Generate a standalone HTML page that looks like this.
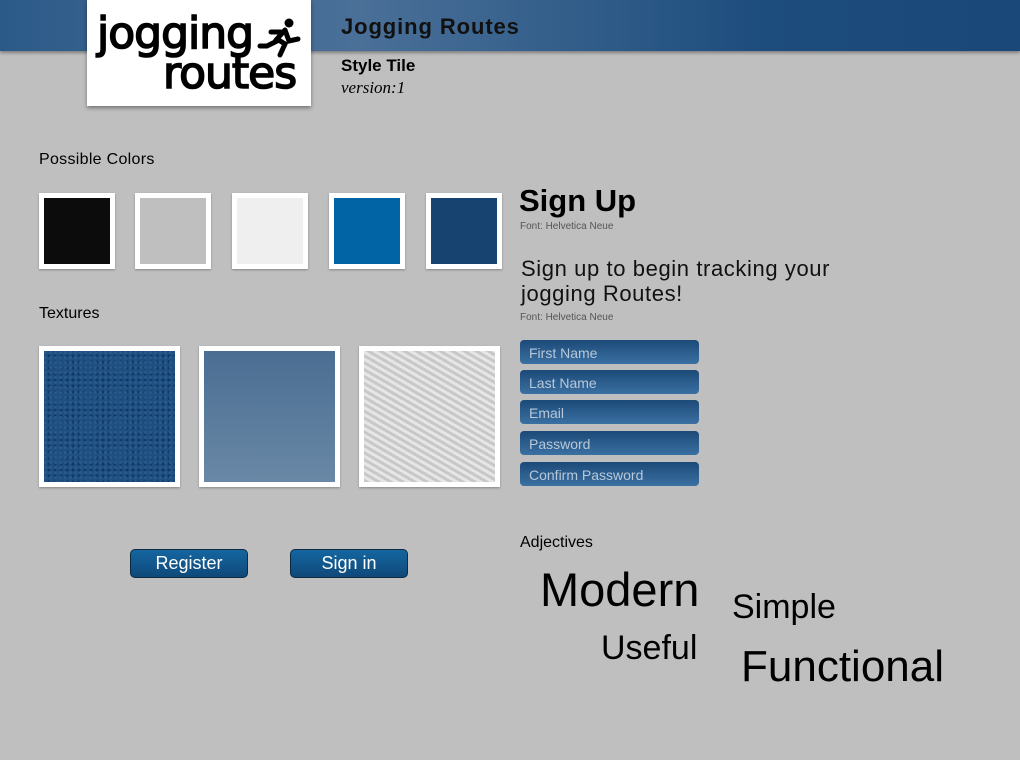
<!DOCTYPE html><html><head><style>
*{margin:0;padding:0;box-sizing:border-box}
body{width:1020px;height:760px;background:#bfbfbf;font-family:"Liberation Sans",sans-serif;position:relative;overflow:hidden}
.a{position:absolute}
.hdr{left:0;top:0;width:1020px;height:51px;background:linear-gradient(90deg,#2c5a88,#4a7098 35%,#1d4d7d 75%,#1a4878);box-shadow:0 2px 3px rgba(0,0,0,.35)}
.logo{left:87px;top:0;width:224px;height:106px;background:#fff;box-shadow:0 2px 4px rgba(0,0,0,.4)}
.lt{font-size:44px;line-height:40px;font-family:'DejaVu Sans',sans-serif;letter-spacing:-1px;-webkit-text-stroke:1.6px #000}
.sw{width:76px;height:76px;background:#fff;padding:5px;box-shadow:0 1px 2px rgba(0,0,0,.3)}
.sw div{width:100%;height:100%}
.tx{width:141px;height:141px;background:#fff;padding:5px;top:346px;box-shadow:0 1px 2px rgba(0,0,0,.3)}
.tx div{width:100%;height:100%}
.in{left:520px;width:179px;height:24px;border-radius:4px;background:linear-gradient(#1c4a78,#3a70a2);color:#b8c8d8;font-size:14px;padding:6px 9px;line-height:15px}
.btn{top:549px;width:118px;height:29px;border-radius:5px;border:1px solid #102840;background:linear-gradient(#1466a0,#10497a);color:#fff;font-size:18px;text-align:center;line-height:27px}
</style></head><body>
<div class="a hdr"></div>
<div class="a logo"><div class="a lt" style="left:10px;top:14px">jogging</div><div class="a lt" style="left:76px;top:54px">routes</div>
<svg class="a" style="left:170px;top:16px" width="46" height="42"><circle cx="32" cy="7" r="4.5"/><path d="M28 14 L20 23 L28 28 L23 39 M28 14 L32 25 L41 23 M24 16 L14 16 M20 25 L10 30 L3 30" stroke="#000" stroke-width="5" fill="none" stroke-linecap="round"/></svg></div>
<div class="a" style="left:341px;top:14px;font-size:22px;font-weight:bold;color:#111;letter-spacing:.9px">Jogging Routes</div>
<div class="a" style="left:341px;top:56px;font-size:17px;font-weight:bold">Style Tile</div>
<div class="a" style="left:341px;top:78px;font-size:17px;font-style:italic;font-family:'Liberation Serif',serif">version:1</div>
<div class="a" style="left:39px;top:151px;font-size:16px;letter-spacing:.3px">Possible Colors</div>
<div class="a sw" style="left:39px;top:193px"><div style="background:#0c0c0c"></div></div>
<div class="a sw" style="left:135px;top:193px"><div style="background:#bfbfbf"></div></div>
<div class="a sw" style="left:232px;top:193px"><div style="background:#efefef"></div></div>
<div class="a sw" style="left:329px;top:193px"><div style="background:#0064a5"></div></div>
<div class="a sw" style="left:426px;top:193px"><div style="background:#174371"></div></div>
<div class="a" style="left:39px;top:305px;font-size:16px">Textures</div>
<div class="a tx" style="left:39px"><div style="background:radial-gradient(circle at 30% 30%,#2a5a8c 1px,transparent 2px) 0 0/5px 5px,radial-gradient(circle,#0e3866 1px,transparent 2px) 2px 2px/6px 6px,#1f4f80"></div></div>
<div class="a tx" style="left:199px"><div style="background:linear-gradient(#4a6e92,#6a88a6)"></div></div>
<div class="a tx" style="left:359px"><div style="background:repeating-linear-gradient(30deg,#c8c8c8 0 3px,#e6e6e6 3px 6px),#d8d8d8"></div></div>
<div class="a" style="left:519px;top:183px;font-size:31px;font-weight:bold">Sign Up</div>
<div class="a" style="left:520px;top:221px;font-size:10px;color:#555">Font: Helvetica Neue</div>
<div class="a" style="left:521px;top:256px;font-size:22px;line-height:25px;color:#111;letter-spacing:.6px">Sign up to begin tracking your<br>jogging Routes!</div>
<div class="a" style="left:520px;top:312px;font-size:10px;color:#555">Font: Helvetica Neue</div>
<div class="a in" style="top:340px">First Name</div>
<div class="a in" style="top:370px">Last Name</div>
<div class="a in" style="top:400px">Email</div>
<div class="a in" style="top:431px">Password</div>
<div class="a in" style="top:462px">Confirm Password</div>
<div class="a btn" style="left:130px">Register</div>
<div class="a btn" style="left:290px">Sign in</div>
<div class="a" style="left:520px;top:534px;font-size:16px">Adjectives</div>
<div class="a" style="left:540px;top:562px;font-size:47px">Modern</div>
<div class="a" style="left:732px;top:588px;font-size:34px">Simple</div>
<div class="a" style="left:601px;top:629px;font-size:34px">Useful</div>
<div class="a" style="left:741px;top:642px;font-size:44px">Functional</div>
</body></html>
